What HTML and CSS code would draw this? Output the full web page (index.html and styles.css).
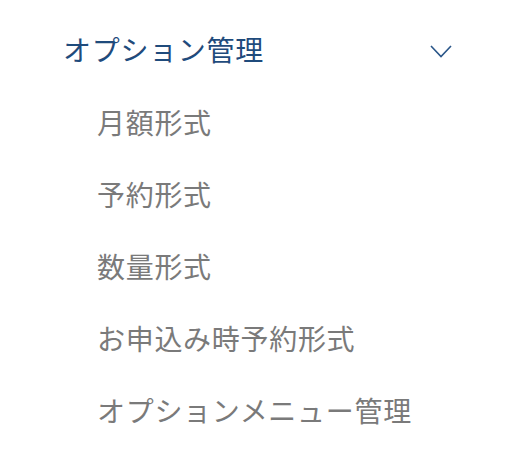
FILE: index.html
```html
<!DOCTYPE html>
<html lang="ja">
<head>
<meta charset="utf-8">
<link rel="stylesheet" href="styles.css">
</head>
<body>
<nav class="menu">
  <div class="menu-head">
    <span class="menu-title">オプション管理</span>
    <svg class="chevron" width="22" height="13" viewBox="0 0 22 13"><polyline points="1,1 11,11.5 21,1" fill="none" stroke="#2a5689" stroke-width="1.6"/></svg>
  </div>
  <ul class="menu-list">
    <li class="menu-item">月額形式</li>
    <li class="menu-item">予約形式</li>
    <li class="menu-item">数量形式</li>
    <li class="menu-item">お申込み時予約形式</li>
    <li class="menu-item">オプションメニュー管理</li>
  </ul>
</nav>
</body>
</html>
```
FILE: styles.css
```css
html, body {
  margin: 0;
  padding: 0;
  background: #ffffff;
}
body {
  font-family: "Noto Sans CJK JP", "Noto Sans", sans-serif;
  font-size: 28px;
  letter-spacing: 0.7px;
}
.menu {
  padding-top: 13px;
  width: 518px;
}
.menu-head {
  display: flex;
  align-items: center;
  justify-content: space-between;
  height: 72px;
  padding-left: 63px;
  padding-right: 66px;
  margin-bottom: 1px;
}
.menu-title {
  color: #1f4b7c;
  line-height: 72px;
}
.chevron {
  display: block;
  margin-top: 5px;
}
.menu-list {
  list-style: none;
  margin: 0;
  padding: 0;
}
.menu-item {
  height: 72px;
  line-height: 72px;
  padding-left: 97px;
  color: #7a7a7a;
}
```
